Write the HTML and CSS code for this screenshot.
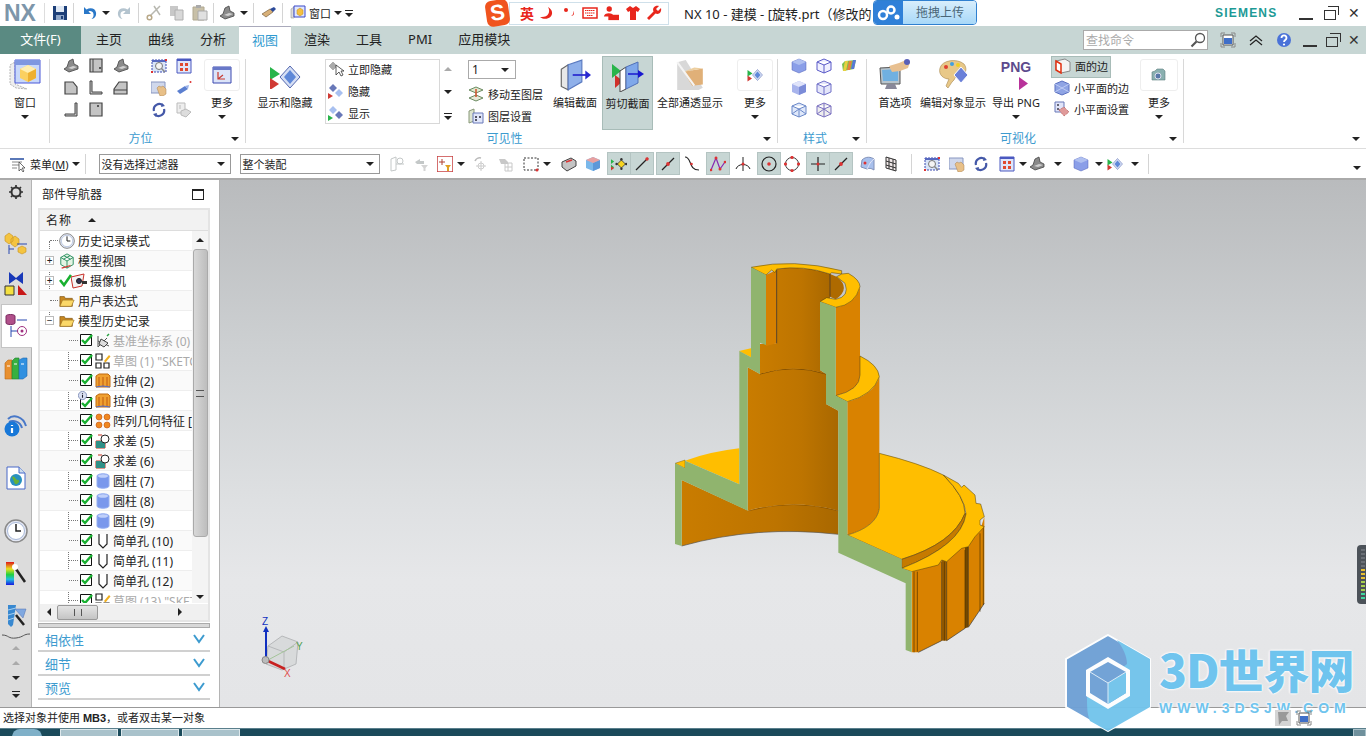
FILE: index.html
```html
<!DOCTYPE html>
<html lang="zh-CN">
<head>
  <meta charset="UTF-8">
  <title>NX 10 - 建模</title>
  <link rel="stylesheet" href="styles.css">
</head>
<body>

<svg class="sprite" xmlns="http://www.w3.org/2000/svg">
  <symbol id="save" viewBox="0 0 16 16"><path d="M1 1h14v14H1z" fill="#1d3f78"/><path d="M4 1h8v6H4z" fill="#dfe8f4"/><path d="M4 10h8v5H4z" fill="#8fa6c8"/><path d="M9 11h2v3H9z" fill="#1d3f78"/></symbol>
  <symbol id="undo" viewBox="0 0 16 16"><path d="M3 2v7h7L7.500 6.500C9 5.500 12 6 12.500 9c.3 2-.5 4-2 5 3.500-.5 5-3.500 4.500-6.500C14.500 3.500 9.500 2 5.500 4.500z" fill="#2a78c8"/></symbol>
  <symbol id="redo" viewBox="0 0 16 16"><path d="M13 2v7H6l2.500-2.500C7 5.500 4 6 3.500 9c-.3 2 .5 4 2 5C2 13.500.5 10.500 1 7.500 1.500 3.500 6.500 2 10.500 4.500z" fill="#b4c4cf"/></symbol>
  <symbol id="cut" viewBox="0 0 16 16"><path d="M14 1L4 11M8 1l6 9" stroke="#b8b8b0" stroke-width="1.500" fill="none"/><circle cx="3.500" cy="12.500" r="2.300" fill="none" stroke="#b8a888" stroke-width="1.500"/></symbol>
  <symbol id="copy" viewBox="0 0 16 16"><path d="M1 1h8v10H1z" fill="#c8c8c8"/><path d="M6 5h8v10H6z" fill="#d8d8d8" stroke="#b0b0b0"/></symbol>
  <symbol id="paste" viewBox="0 0 16 16"><path d="M1 2h11v13H1z" fill="#c8c0a8" stroke="#b0a890"/><path d="M4 0h5v3H4z" fill="#aaa"/><path d="M6 6h9v9H6z" fill="#e0e0e0" stroke="#aaa"/></symbol>
  <symbol id="iso" viewBox="0 0 16 16"><path d="M1 11l3-2 2-6 4-2 1 5 4 2v3l-9 3z" fill="#8a8a8a" stroke="#444" stroke-width=".8"/><path d="M5 10l5-2 4 1-5 2z" fill="#d0d0d0"/></symbol>
  <symbol id="eraser" viewBox="0 0 16 16"><path d="M1 9l8-5 3 3-7 5z" fill="#d8b078" stroke="#6a5030" stroke-width=".6"/><path d="M9 4l4-2 2 2-3 3z" fill="#2c4a9a"/></symbol>
  <symbol id="window" viewBox="0 0 16 16"><path d="M1 4l3-2v11H1z" fill="#ddd" stroke="#888" stroke-width=".5"/><path d="M4 1h11v11H4z" fill="#dfe6ff" stroke="#3a48c8"/><path d="M7 5l3-2 3 2v4l-3 2-3-2z" fill="#f6c040" stroke="#b88820" stroke-width=".5"/></symbol>

  <symbol id="winbig" viewBox="0 0 32 32"><path d="M1 6l5-3v22l12 5-11-1-6-4z" fill="#eee" stroke="#999" stroke-width=".7" stroke-dasharray="2 1"/><path d="M6 1h25v23H6z" fill="#c8d8fa" stroke="#4a58d8"/><path d="M6 1h25v5H6z" fill="#7f97e0"/><path d="M11 10l8-4 8 4v9l-8 4-8-4z" fill="#fbd060"/><path d="M11 10l8 4 8-4-8-4z" fill="#ffeeb0"/><path d="M19 14v9l8-4v-9z" fill="#eeb030"/></symbol>
  <symbol id="v-top" viewBox="0 0 16 16"><path d="M2 1h12v13H2z" fill="#c4c4c4" stroke="#444" stroke-width="1.200"/><path d="M5 1v13" stroke="#444"/><circle cx="12" cy="10" r="1" fill="#333"/></symbol>
  <symbol id="v-front" viewBox="0 0 16 16"><path d="M2 2h8l4 5v7H2z" fill="#c4c4c4" stroke="#444" stroke-width="1.200"/></symbol>
  <symbol id="v-left" viewBox="0 0 16 16"><path d="M2 1h2v11h10v2H2z" fill="#c4c4c4" stroke="#444"/></symbol>
  <symbol id="v-right" viewBox="0 0 16 16"><path d="M1 9l5-7h8v12H1z" fill="#c4c4c4" stroke="#444" stroke-width="1.200"/><path d="M1 10h13" stroke="#444"/></symbol>
  <symbol id="v-corner" viewBox="0 0 16 16"><path d="M12 1h2v13H2v-2h10z" fill="#c4c4c4" stroke="#444"/></symbol>
  <symbol id="v-back" viewBox="0 0 16 16"><path d="M2 1h12v13H2z" fill="#c4c4c4" stroke="#444" stroke-width="1.200"/><circle cx="10" cy="4" r="1" fill="#333"/></symbol>
  <symbol id="fit" viewBox="0 0 16 16"><path d="M1 2h14v12H1z" fill="#d8e4f8" stroke="#3a48b0" stroke-dasharray="2 1"/><path d="M1 2h14v2H1z" fill="#5668c0"/><circle cx="8" cy="8" r="3.500" fill="#f4f4f4" stroke="#777"/><path d="M10.500 10.500L14 14" stroke="#888" stroke-width="1.500"/><path d="M14 1h2v2h-2zM0 13h2v2H0z" fill="#d33"/></symbol>
  <symbol id="fitred" viewBox="0 0 16 16"><path d="M1 1h14v14H1z" fill="#dfe6fa" stroke="#4a58c0"/><path d="M1 1h14v2H1z" fill="#4a58c0"/><path d="M4 5h3v3H4zM9 5h3v3H9zM4 10h3v3H4zM9 10h3v3H9z" fill="#e04a30"/></symbol>
  <symbol id="pan" viewBox="0 0 16 16"><path d="M0 2h14v11H0z" fill="#d0d8ec" stroke="#8896c0"/><path d="M6 8l2-2 2 1 2-1 3 3v5l-3 2H9z" fill="#e8c088" stroke="#a88050" stroke-width=".5"/></symbol>
  <symbol id="persp" viewBox="0 0 16 16"><path d="M1 11l8-5 3 3-8 5z" fill="#5b7fd0"/><path d="M9 6l3 3 1-4z" fill="#9ab0e8"/><circle cx="14.500" cy="2" r="1" fill="#d33"/></symbol>
  <symbol id="rotate" viewBox="0 0 16 16"><path d="M3 9A5.500 5.500 0 0 1 12 3.500" fill="none" stroke="#4458a8" stroke-width="2.200"/><path d="M13 7A5.500 5.500 0 0 1 4 12.500" fill="none" stroke="#4458a8" stroke-width="2.200"/><path d="M11 1l3 3-4 1zM5 15l-3-3 4-1z" fill="#4458a8"/></symbol>
  <symbol id="restore" viewBox="0 0 16 16"><path d="M1 1h8v10H1z" fill="#eee" stroke="#bbb"/><path d="M5 9l5-2 5 3-5 5-5-2z" fill="#ddd" stroke="#bbb"/><path d="M3 4h2M3 6h2" stroke="#bbb"/></symbol>
  <symbol id="csys" viewBox="0 0 20 20"><path d="M1 2h18v16H1z" fill="#dce4f8" stroke="#3a48b0"/><path d="M1 2h18v3H1z" fill="#6878c8"/><path d="M6 7v7h7M6 14l5-4" stroke="#c83a30" stroke-width="1.200" fill="none"/></symbol>
  <symbol id="showhide" viewBox="0 0 32 24"><path d="M1 2l10 7-10 6z" fill="#28b44a"/><path d="M1 13l9 6-9 6z" fill="#d03a34"/><path d="M11 12L21 1l10 11-10 11z" fill="#d6dff4" stroke="#5468b0"/><path d="M15 12l6-7 6 7-6 7z" fill="#5f88d8"/></symbol>
  <symbol id="hidenow" viewBox="0 0 16 16"><path d="M1 5l4-4 4 4-4 4z" fill="#aaa" stroke="#888" stroke-width=".5"/><path d="M8 4v10l3-3 2 4 2-1-2-4h3z" fill="#fff" stroke="#333" stroke-width=".8"/></symbol>
  <symbol id="hide" viewBox="0 0 16 16"><path d="M1 5l4-4 4 4-4 4z" fill="#6878b8"/><path d="M7 10l4-4 4 4-4 4z" fill="#a8c0f0"/><path d="M0 10l5 3-5 3z" fill="#d03a34"/></symbol>
  <symbol id="show" viewBox="0 0 16 16"><path d="M1 5l4-4 4 4-4 4z" fill="#a8c0f0"/><path d="M7 10l4-4 4 4-4 4z" fill="#6878b8"/><path d="M0 10l5 3-5 3z" fill="#28b44a"/></symbol>
  <symbol id="movelayer" viewBox="0 0 16 16"><path d="M1 4l7-3 7 3-7 3z" fill="#dfe8d0" stroke="#6a8a60"/><path d="M1 12l7-3 7 3-7 3z" fill="#e8e8d8" stroke="#6a8a60"/><path d="M8 3v8" stroke="#d0502a" stroke-width="1.500"/></symbol>
  <symbol id="layers" viewBox="0 0 16 16"><path d="M1 3l5-2v12l-5 2z" fill="#dde4d0" stroke="#889878"/><path d="M5 5h10v10H5z" fill="#e0e6fa" stroke="#6878b8"/><path d="M7 8h2v2H7zM11 8h2v2h-2zM7 11h2v2H7z" fill="#556"/></symbol>
  <symbol id="editsec" viewBox="0 0 28 28"><path d="M2 9l6-4v22l-6-3z" fill="#e8e8e8" stroke="#666"/><path d="M8 5l12-4v19L8 27z" fill="#8fb0ea" stroke="#5a7ac0"/><path d="M12 14h13" stroke="#2828d0" stroke-width="1.500"/><path d="M23 10l5 4-5 4z" fill="#2828d0"/></symbol>
  <symbol id="cutsec" viewBox="0 0 32 32"><path d="M0 4l9 7-9 7z" fill="#28b44a"/><path d="M3 15l8 6-8 7z" fill="#d0302a"/><path d="M8 11l6-4v22l-6 3z" fill="#fff" stroke="#444"/><path d="M14 7l12-5v21l-12 6z" fill="#7fa8ea" stroke="#5070b8"/><path d="M16 14h12" stroke="#1818d0" stroke-width="1.500"/><path d="M26 10l6 4-6 4z" fill="#1818d0"/></symbol>
  <symbol id="clear" viewBox="0 0 30 30"><path d="M3 3l8-2 16 26-4 2H3z" fill="#d8d8d8"/><path d="M9 12l18-3v15l-10 1z" fill="#e0b078"/><path d="M9 12l10-4 8 1-18 3z" fill="#edcfa0"/><path d="M3 3l16 22" stroke="#f4f4f4" stroke-width="2"/></symbol>
  <symbol id="s1" viewBox="0 0 16 16"><path d="M1 4l7-3 7 3v8l-7 3-7-3z" fill="#8a9ee8" stroke="#5060b8" stroke-width=".5"/><path d="M1 4l7 3 7-3-7-3z" fill="#b0c0f0"/></symbol>
  <symbol id="s2" viewBox="0 0 16 16"><path d="M1 4l7-3 7 3v8l-7 3-7-3zM1 4l7 3 7-3M8 7v8" fill="#f0f0ff" stroke="#5a5ac8"/></symbol>
  <symbol id="s3" viewBox="0 0 16 16"><path d="M1 6l3-3 11-1-2 9-11 2z" fill="#7ac050"/><path d="M4 3h3L5 13H2z" fill="#e8d040"/><path d="M8 3h3l-2 9H6z" fill="#e88040"/><path d="M12 2h3l-2 9h-3z" fill="#5878d8"/></symbol>
  <symbol id="s4" viewBox="0 0 16 16"><path d="M1 4l7-3 7 3v8l-7 3-7-3z" fill="#a8b4ec"/><path d="M1 4l7 3 7-3-7-3z" fill="#e0e4fa"/><path d="M8 7v8l7-3V4z" fill="#7c8cd8"/></symbol>
  <symbol id="s5" viewBox="0 0 16 16"><path d="M1 4l7-3 7 3v8l-7 3-7-3zM1 4l7 3 7-3M8 7v8" fill="#e4e6fa" stroke="#7070c8"/></symbol>
  <symbol id="s6" viewBox="0 0 16 16"><path d="M1 4l7-3 7 3v8l-7 3-7-3zM1 4l7 3 7-3M8 7v8M1 12l7-5 7 5" fill="#dfe8fa" stroke="#6a88c8"/></symbol>
  <symbol id="s7" viewBox="0 0 16 16"><path d="M1 4l7-3 7 3v8l-7 3-7-3zM1 4l7 3 7-3M8 7v8M1 12l7-5 7 5M8 1v6" fill="#eee" stroke="#7a70c0"/></symbol>
  <symbol id="prefs" viewBox="0 0 32 32"><path d="M1 9l20-1v17H2z" fill="#b8c4cc" stroke="#555"/><path d="M3 11l16-1v12H4z" fill="#70b0e0"/><path d="M8 25h8l2 5H6z" fill="#889"/><path d="M10 7l10-3 7-3 4 2-2 6-8 3-8 1z" fill="#e8c090"/><circle cx="28" cy="3" r="3" fill="#5a60b8"/></symbol>
  <symbol id="palette" viewBox="0 0 32 32"><path d="M3 9C5 1 20-1 27 5c3 4 2 8 0 10-5 3-8 1-10 6l-2 2-4 6-2-2 3-7C7 20 1 16 3 9z" fill="#e8c888" stroke="#a88850" stroke-width=".6"/><circle cx="9" cy="8" r="2" fill="#e04030"/><circle cx="15" cy="5" r="2" fill="#40a0e0"/><circle cx="21" cy="6" r="2" fill="#f0d020"/><path d="M17 16l7-8 7 8-7 8z" fill="#6a80d8" stroke="#fff"/></symbol>
  <symbol id="edges" viewBox="0 0 16 16"><path d="M1 3l9-2 5 3v9l-9 2-5-3z" fill="#f4f4f4" stroke="#888"/><path d="M1 3l5 3v9l-5-3z" fill="#fff" stroke="#e03010" stroke-width="1.500"/></symbol>
  <symbol id="facet" viewBox="0 0 16 16"><path d="M1 4l7-3 7 3v8l-7 3-7-3z" fill="#8fa4e4" stroke="#5a70c0"/><path d="M1 4l14 8M15 4L1 12" stroke="#c8d4f8" stroke-width=".8"/></symbol>
  <symbol id="facetset" viewBox="0 0 16 16"><path d="M1 1h9v10H1z" fill="#e0e4f8" stroke="#6878b8"/><path d="M3 3h2v2H3zM3 7h2v2H3z" fill="#667"/><path d="M5 9l5-3 5 5-5 4z" fill="#e09a9a" stroke="#b86060" stroke-dasharray="1 1"/></symbol>
  <symbol id="camera" viewBox="0 0 16 16"><path d="M1 5l3-1 2-2h6l2 2v9H1z" fill="#8ab0b0" stroke="#5f7f80" stroke-width=".6"/><circle cx="7" cy="9" r="3" fill="#5878a8" stroke="#dde"/></symbol>
  <symbol id="menu" viewBox="0 0 16 16"><path d="M0 2h14v2H0z" fill="#5a78b8"/><path d="M2 6h10M2 9h7M2 12h5" stroke="#888" stroke-width="1.200"/><path d="M9 6v9l2-2 2 3 1-1-2-3h3z" fill="#fff" stroke="#333" stroke-width=".7"/></symbol>
  <symbol id="filter1" viewBox="0 0 16 16"><path d="M2 3l5-2v13l-5 1zM7 8h8" stroke="#c4c8c8" fill="none"/><circle cx="11" cy="5" r="3" fill="none" stroke="#c4c8c8"/></symbol>
  <symbol id="filter2" viewBox="0 0 16 16"><path d="M2 6l5-3v2h4v3H4z" fill="#c4c8c8"/><path d="M8 9h7l-2.500 3v3h-2v-3z" fill="#d4d4d4"/></symbol>
  <symbol id="filter3" viewBox="0 0 16 16"><path d="M0 0h16v16H0z" fill="#fff" stroke="#c84040" stroke-width="1.500"/><path d="M5 3v6M2 6h6" stroke="#b04030"/><path d="M8 9h6l-2 2.500V15h-2v-3.500z" fill="#e0a020"/></symbol>
  <symbol id="grayrot" viewBox="0 0 16 16"><path d="M2 5a5 5 0 0 1 6-3" fill="none" stroke="#bbb" stroke-width="1.500"/><path d="M8 5v10M3 10h10" stroke="#ccc"/><circle cx="8" cy="10" r="3" fill="none" stroke="#ccc"/></symbol>
  <symbol id="grayset" viewBox="0 0 16 16"><path d="M1 3h6l3 3v2H3z" fill="#c8c8c8"/><path d="M7 7h7v8H7zM7 11h7M10 7v8" fill="none" stroke="#c8c8c8"/></symbol>
  <symbol id="dashbox" viewBox="0 0 16 16"><path d="M1 2h14v12H1z" fill="#fff" stroke="#333" stroke-dasharray="2 1.500"/><circle cx="14" cy="14" r="1.500" fill="#d33"/></symbol>
  <symbol id="solid" viewBox="0 0 16 16"><path d="M1 6l9-4 5 3v5l-9 5-5-4z" fill="#c4c4c4" stroke="#444"/><path d="M5 6l6-2" stroke="#d33" stroke-width="1.500"/></symbol>
  <symbol id="cube" viewBox="0 0 16 16"><path d="M1 4l7-3 7 3v8l-7 3-7-3z" fill="#7ab8ea"/><path d="M8 7v8l7-3V4z" fill="#5c98d8"/><path d="M1 4l7 3 7-3-7-3z" fill="#e8a0a0"/></symbol>
  <symbol id="t-all" viewBox="0 0 20 16"><path d="M0 2l4 3-4 3zM0 9l4 3-4 3z" fill="#28b44a"/><path d="M0 11l4 2-4 3z" fill="#d03a34"/><path d="M13 3l5 5-5 5-5-5z" fill="#f6d420" stroke="#333"/><circle cx="13" cy="2" r="1.500" fill="#333"/><circle cx="13" cy="14" r="1.500" fill="#333"/><circle cx="7" cy="8" r="1.500" fill="#333"/><circle cx="19" cy="8" r="1.500" fill="#333"/></symbol>
  <symbol id="t-line" viewBox="0 0 16 16"><path d="M2 14L14 2" stroke="#222" stroke-width="1.200"/><circle cx="13" cy="3" r="1.700" fill="#d33"/></symbol>
  <symbol id="t-mid" viewBox="0 0 16 16"><path d="M2 14L14 2" stroke="#222" stroke-width="1.200"/><circle cx="8" cy="8" r="1.900" fill="#d33"/></symbol>
  <symbol id="t-curve" viewBox="0 0 16 16"><path d="M1 1c7 0 3 13 14 13" fill="none" stroke="#222" stroke-width="1.200"/><circle cx="7.500" cy="8" r="1.300" fill="#d33"/></symbol>
  <symbol id="t-poly" viewBox="0 0 16 16"><path d="M1 14L6 2l4 11 5-7" fill="none" stroke="#8828b0" stroke-width="1.200"/><circle cx="6" cy="2" r="1.500" fill="#d33"/><circle cx="10" cy="13" r="1.500" fill="#d33"/><circle cx="1" cy="14" r="1.300" fill="#d33"/><circle cx="15" cy="6" r="1.300" fill="#d33"/></symbol>
  <symbol id="t-perp" viewBox="0 0 16 16"><path d="M8 1v14M1 13C3 7 13 7 15 13" fill="none" stroke="#222"/><circle cx="8" cy="8" r="1.500" fill="#d33"/></symbol>
  <symbol id="t-center" viewBox="0 0 16 16"><circle cx="8" cy="8" r="7" fill="none" stroke="#222" stroke-width="1.200"/><circle cx="8" cy="8" r="1.800" fill="#d33"/></symbol>
  <symbol id="t-quad" viewBox="0 0 16 16"><circle cx="8" cy="8" r="6.500" fill="none" stroke="#333"/><g fill="#d33"><circle cx="8" cy="1.500" r="1.600"/><circle cx="8" cy="14.500" r="1.600"/><circle cx="1.500" cy="8" r="1.600"/><circle cx="14.500" cy="8" r="1.600"/></g></symbol>
  <symbol id="t-cross" viewBox="0 0 16 16"><path d="M8 1v14M1 8h14" stroke="#222" stroke-width="1.200"/><circle cx="8" cy="8" r="1.500" fill="#d33"/></symbol>
  <symbol id="t-face" viewBox="0 0 16 16"><path d="M3 4C7 0 12 1 15 3v11c-3-2-5-2-7-1L2 11z" fill="#a8c0ec" stroke="#8090b8"/><path d="M8 13c2-3 2-6 7-10" fill="none" stroke="#e8e8f8"/><circle cx="6" cy="7" r="1.500" fill="#d33"/></symbol>
  <symbol id="t-grid" viewBox="0 0 16 16"><path d="M3 1l10 3v11L3 12zM3 5l10 3M3 9l10 3M6 2v11M10 3v11" fill="#f0e8e8" stroke="#333"/></symbol>
  <symbol id="mag" viewBox="0 0 16 16"><circle cx="10" cy="6" r="4.500" fill="#fff" stroke="#555" stroke-width="1.300"/><path d="M6.500 9.500L1.500 14.500" stroke="#555" stroke-width="2.200"/></symbol>
  <symbol id="fullscreen" viewBox="0 0 16 16"><path d="M1 5V1h4M11 1h4v4M15 11v4h-4M5 15H1v-4" fill="none" stroke="#888"/><path d="M3 3h10v10H3z" fill="#fff" stroke="#555"/><path d="M4 6h8v6H4z" fill="#3f6fc8"/></symbol>
  <symbol id="help" viewBox="0 0 16 16"><circle cx="8" cy="8" r="7" fill="#4a72d8"/><path d="M5.500 6c0-3.500 5-3.500 5 0 0 2-2.500 2-2.500 4" fill="none" stroke="#fff" stroke-width="1.800"/><circle cx="8" cy="12.500" r="1.100" fill="#fff"/></symbol>

  <symbol id="gear" viewBox="0 0 16 16"><circle cx="8" cy="8" r="4.500" fill="none" stroke="#333" stroke-width="2"/><path d="M8 1v3M8 12v3M1 8h3M12 8h3M3 3l2 2M11 11l2 2M13 3l-2 2M5 11l-2 2" stroke="#333" stroke-width="1.700"/></symbol>
  <symbol id="r-asm" viewBox="0 0 24 24"><path d="M1 5l4-3 4 3v5l-4 3-4-3zM7 8l4-3 4 3v5l-4 3-4-3z" fill="#f4c440" stroke="#c89020" stroke-width=".6"/><path d="M5 14v9M5 18h5M13 13h10" stroke="#2848b0"/><path d="M14 17l4-2 4 2v4l-4 2-4-2z" fill="#f4c440" stroke="#c89020" stroke-width=".6"/></symbol>
  <symbol id="r-con" viewBox="0 0 24 24"><path d="M5 0l7 6 7-6v12l-7-5-7 5z" fill="#1838b8"/><path d="M1 14h9v9H1z" fill="#f4e040" stroke="#333"/><path d="M14 23h9l-9-10z" fill="#c81818"/></symbol>
  <symbol id="r-part" viewBox="0 0 24 24"><path d="M1 2c0-2 9-2 9 0v7c0 2-9 2-9 0z" fill="#b0508a" stroke="#7a2a60"/><path d="M12 6h10M6 12v11M6 17h7" stroke="#2848b0"/><circle cx="17" cy="17" r="4.500" fill="none" stroke="#a03080"/><circle cx="17" cy="17" r="1.500" fill="#a03080"/></symbol>
  <symbol id="r-books" viewBox="0 0 24 24"><path d="M1 6l3-3h4v19H1z" fill="#e89030" stroke="#b86a18" stroke-width=".6"/><path d="M8 4l3-3h4v21H8z" fill="#38b040" stroke="#208030" stroke-width=".6"/><path d="M15 3l4-2h4v18l-4 3h-4z" fill="#3090e0" stroke="#2068b0" stroke-width=".6"/><path d="M3 9h3M10 7h3M17 7h3" stroke="#fff"/></symbol>
  <symbol id="r-info" viewBox="0 0 24 24"><path d="M4 6C9 1 19 3 22 13" fill="none" stroke="#4878c8" stroke-width="2"/><path d="M5 9c4-2 11-1 13 6" fill="none" stroke="#4878c8" stroke-width="2"/><circle cx="8" cy="16" r="7.500" fill="#1878d8"/><path d="M8 12v1M8 15v5" stroke="#fff" stroke-width="2.200"/></symbol>
  <symbol id="r-web" viewBox="0 0 20 24"><path d="M1 1h12l6 6v16H1z" fill="#fff" stroke="#4868c8"/><path d="M13 1v6h6" fill="#cde" stroke="#4868c8"/><circle cx="10" cy="14" r="6" fill="#2890c0"/><path d="M6 11c3-2 3 3 6 3s0 5-3 4z" fill="#68b038"/></symbol>
  <symbol id="clock" viewBox="0 0 24 24"><circle cx="12" cy="12" r="11" fill="#e4e8f4" stroke="#8a8a8a" stroke-width="1.500"/><circle cx="12" cy="12" r="8.500" fill="#fff" stroke="#a8b8d8"/><path d="M12 5v7h5" fill="none" stroke="#222" stroke-width="1.500"/></symbol>
  <symbol id="r-color" viewBox="0 0 22 24"><defs><linearGradient id="rb" x1="0" y1="0" x2="0" y2="1"><stop offset="0" stop-color="#e01818"/><stop offset=".3" stop-color="#e8e020"/><stop offset=".55" stop-color="#20d040"/><stop offset=".75" stop-color="#20c0e0"/><stop offset="1" stop-color="#1818e0"/></linearGradient></defs><path d="M1 0h8v23H1z" fill="url(#rb)"/><path d="M11 7l9 13" stroke="#222" stroke-width="2.500"/><circle cx="10" cy="5" r="3" fill="#fff"/></symbol>
  <symbol id="r-tool" viewBox="0 0 22 24"><path d="M3 1h8l-3 20-2 2-3-3z" fill="#3888d0"/><path d="M3 6l8-2M3 11l7-2M3 16l6-2" stroke="#a8d0f0"/><path d="M10 5h11l-3 9z" fill="#80a8e0" stroke="#5070b0" stroke-width=".5"/><path d="M11 11l8 10" stroke="#222" stroke-width="2.500"/></symbol>

  <symbol id="t-view" viewBox="0 0 18 18"><path d="M9 1l7 4v8l-7 4-7-4V5zM2 5l7 4 7-4M9 9v8M5.500 3L13 7M12.500 3L5 7" fill="#e4f4e4" stroke="#208a58"/><path d="M3 17l10-3" stroke="#d33" stroke-width="1.300"/></symbol>
  <symbol id="t-cam" viewBox="0 0 16 16"><path d="M0 4l13-3-2 12-9 2z" fill="#f4f4f4" stroke="#c83028"/><circle cx="8" cy="8" r="2.500" fill="#335" stroke="#222"/><path d="M11 8h5v3h-5z" fill="#333"/></symbol>
  <symbol id="folder" viewBox="0 0 18 16"><path d="M1 3h5l1 2h8v9H1z" fill="#c88820" stroke="#7a5010" stroke-width=".7"/><path d="M1 14l3-7h13l-3 7z" fill="#fbd868" stroke="#9a7020" stroke-width=".7"/></symbol>
  <symbol id="chk" viewBox="0 0 13 13"><path d="M.5.500h11v11H.5z" fill="#fff" stroke="#111"/><path d="M2 6l3 3 7-8" fill="none" stroke="#18b030" stroke-width="2.400"/></symbol>
  <symbol id="f-datum" viewBox="0 0 16 16"><path d="M3 14V3M3 8l11 5M3 14l9-9" fill="none" stroke="#555"/><path d="M6 6l7 4-4 4-5-3z" fill="#ddd" stroke="#444"/><path d="M12 3l2-2" stroke="#28a040" stroke-width="1.500"/></symbol>
  <symbol id="f-sketch" viewBox="0 0 16 16"><path d="M1 1h6v6H1zM1 10h5v5H1zM9 10h5v5H9z" fill="#fff" stroke="#222" stroke-width="1.200"/><path d="M9 8l5-6 1.500 1.500-5 6z" fill="#f0b020"/></symbol>
  <symbol id="f-extr" viewBox="0 0 16 16"><path d="M1 3l3-2h9l2 2v11H1z" fill="#f0a030" stroke="#c06a10"/><path d="M4 4v10M8 4v10M12 4v10" stroke="#c05a10"/><path d="M1 14l7-1 7 1" stroke="#5070d0" fill="none"/></symbol>
  <symbol id="f-pattern" viewBox="0 0 16 16"><g fill="#f08820" stroke="#c05010" stroke-width=".6"><circle cx="4" cy="4" r="3"/><circle cx="12" cy="4" r="3"/><circle cx="4" cy="12" r="3"/><circle cx="12" cy="12" r="3"/></g></symbol>
  <symbol id="f-sub" viewBox="0 0 16 16"><path d="M3 2h4M1 8h9v7H1z" fill="#2f9088" stroke="#c03020"/><path d="M1 8h9v7H1z" fill="#2f9088"/><circle cx="10" cy="6" r="4" fill="#fff" stroke="#222"/></symbol>
  <symbol id="f-cyl" viewBox="0 0 14 16"><path d="M1 3c0-3 12-3 12 0v10c0 3-12 3-12 0z" fill="#7a98ec" stroke="#98b0f0"/><ellipse cx="7" cy="3" rx="5" ry="1.800" fill="#c0d0fa"/></symbol>
  <symbol id="f-hole" viewBox="0 0 12 16"><path d="M2 1v10l4 4 4-4V1" fill="#fff" stroke="#222" stroke-width="1.200"/></symbol>
  <symbol id="f-info" viewBox="0 0 16 16"><circle cx="6" cy="6" r="5.500" fill="#d8def0" stroke="#7080b0"/><path d="M6 3v1M6 5v4" stroke="#223" stroke-width="1.400"/></symbol>

  <symbol id="chev" viewBox="0 0 12 10"><path d="M1 1l5 7 5-7" fill="none" stroke="#3d9bcf" stroke-width="2"/></symbol>
</svg>

<header class="titlebar">
  <span class="nx-logo">NX</span>
  <div class="qat">
    <svg class="ic"><use href="#save"/></svg>
    <span class="vsep"></span>
    <svg class="ic"><use href="#undo"/></svg><i class="caret"></i>
    <svg class="ic"><use href="#redo"/></svg>
    <span class="vsep"></span>
    <svg class="ic"><use href="#cut"/></svg>
    <svg class="ic"><use href="#copy"/></svg>
    <svg class="ic"><use href="#paste"/></svg>
    <span class="vsep"></span>
    <svg class="ic tight"><use href="#iso"/></svg><i class="caret"></i>
    <span class="vsep"></span>
    <svg class="ic"><use href="#eraser"/></svg>
    <span class="vsep"></span>
    <svg class="ic"><use href="#window"/></svg>
    <span class="qat-text">窗口</span><i class="caret"></i><i class="caret-more"></i>
  </div>
  <div class="ime">
    <span class="ime-logo">S</span>
    <div class="ime-bar">
      <b>英</b>
      <svg class="ic" viewBox="0 0 16 16"><path d="M9 2c3 5 0 11-8 10 5 4 13 1 12-5-.3-2-2-4-4-5z" fill="#e8261c"/></svg>
      <svg class="ic" viewBox="0 0 16 16"><circle cx="5" cy="5" r="2" fill="#e8261c"/><path d="M12 6c1 2 0 4-2 5 3 0 4-3 2-5z" fill="#e8261c"/></svg>
      <svg class="ic" viewBox="0 0 16 16"><path d="M1 3h14v10H1z" fill="none" stroke="#e8261c" stroke-width="1.500"/><path d="M3 5.500h10M3 8h10M5 10.500h6" stroke="#e8261c" stroke-width="1.200" stroke-dasharray="1.500 .5"/></svg>
      <svg class="ic" viewBox="0 0 18 16"><circle cx="7" cy="3.500" r="3" fill="#e8261c"/><path d="M1 12c0-5 11-5 11 0z" fill="#e8261c"/><path d="M6 10h12v6H6z" fill="#e8261c"/></svg>
      <svg class="ic" viewBox="0 0 16 16"><path d="M5 1L1 4l2 3 2-1v9h6V6l2 1 2-3-4-3-3 2z" fill="#e8261c"/></svg>
      <svg class="ic" viewBox="0 0 16 16"><path d="M15 3l-3 3-2-2 3-3C9 0 6 3 7.500 6.500L1 13l2 2 6.500-6.500C13 10 16 7 15 3z" fill="#e8261c"/></svg>
    </div>
  </div>
  <span class="doc-title">NX 10 - 建模 - [旋转.prt（修改的</span>
  <div class="upload">
    <span class="upload-ic"><svg viewBox="0 0 24 16" width="24" height="16"><circle cx="6" cy="10" r="4" fill="none" stroke="#fff" stroke-width="2.500"/><circle cx="14" cy="5" r="3.500" fill="none" stroke="#fff" stroke-width="2.500"/><circle cx="20" cy="12" r="2.500" fill="#fff"/></svg></span>
    <span class="upload-text">拖拽上传</span>
  </div>
  <span class="siemens">SIEMENS</span>
  <div class="winctl">
    <span class="w-min"></span><span class="w-max"></span><span class="w-close">✕</span>
  </div>
</header>

<nav class="tabs">
  <span class="tab file-tab">文件(F)</span>
  <span class="tab t-home">主页</span>
  <span class="tab t-a">曲线</span>
  <span class="tab t-a">分析</span>
  <span class="tab active">视图</span>
  <span class="tab t-b">渲染</span>
  <span class="tab t-a">工具</span>
  <span class="tab t-a">PMI</span>
  <span class="tab t-a">应用模块</span>
  <div class="tabs-right">
    <div class="search"><span>查找命令</span><svg class="ic"><use href="#mag"/></svg></div>
    <svg class="ic"><use href="#fullscreen"/></svg>
    <svg class="ic small" viewBox="0 0 16 12"><path d="M2 7l6-5 6 5M2 11l6-5 6 5" fill="none" stroke="#222" stroke-width="1.200"/></svg>
    <svg class="ic"><use href="#help"/></svg>
    <div class="winctl inner">
      <span class="w-min"></span><span class="w-max"></span><span class="w-close">✕</span>
    </div>
  </div>
</nav>

<section class="ribbon">
  <div class="rb-group g-window">
    <div class="rb-body">
      <div class="big w50"><svg class="ic32"><use href="#winbig"/></svg><span>窗口</span><i class="caret"></i></div>
    </div>
  </div>

  <div class="rb-group g-orient">
    <div class="rb-body">
      <div class="icon-grid cols3">
        <svg class="ic"><use href="#iso"/></svg><svg class="ic"><use href="#v-top"/></svg><svg class="ic"><use href="#iso"/></svg>
        <svg class="ic"><use href="#v-front"/></svg><svg class="ic"><use href="#v-left"/></svg><svg class="ic"><use href="#v-right"/></svg>
        <svg class="ic"><use href="#v-corner"/></svg><svg class="ic"><use href="#v-back"/></svg><span></span>
      </div>
      <div class="icon-grid cols2">
        <svg class="ic"><use href="#fit"/></svg><svg class="ic"><use href="#fitred"/></svg>
        <svg class="ic"><use href="#pan"/></svg><svg class="ic"><use href="#persp"/></svg>
        <svg class="ic"><use href="#rotate"/></svg><svg class="ic"><use href="#restore"/></svg>
      </div>
      <div class="big more"><div class="more-box"><svg class="ic20"><use href="#csys"/></svg></div><span>更多</span><i class="caret"></i></div>
    </div>
    <div class="rb-foot"><span>方位</span><i class="caret"></i></div>
  </div>

  <div class="rb-group g-vis">
    <div class="rb-body">
      <div class="big w78"><svg class="ic32 wide"><use href="#showhide"/></svg><span>显示和隐藏</span></div>
      <div class="list-box">
        <div class="row"><svg class="ic"><use href="#hidenow"/></svg>立即隐藏</div>
        <div class="row"><svg class="ic"><use href="#hide"/></svg>隐藏</div>
        <div class="row"><svg class="ic"><use href="#show"/></svg>显示</div>
      </div>
      <div class="list-arrows"><i class="caret up"></i><i class="caret"></i><i class="caret-more"></i></div>
      <div class="layer-col">
        <div class="layer-select"><span>1</span><i class="caret"></i></div>
        <div class="row"><svg class="ic"><use href="#movelayer"/></svg>移动至图层</div>
        <div class="row"><svg class="ic"><use href="#layers"/></svg>图层设置</div>
      </div>
      <div class="big w56"><svg class="ic32"><use href="#editsec"/></svg><span>编辑截面</span></div>
      <div class="big w51 hl"><svg class="ic32"><use href="#cutsec"/></svg><span>剪切截面</span></div>
      <div class="big w74"><svg class="ic32"><use href="#clear"/></svg><span>全部通透显示</span></div>
      <div class="big more ml10"><div class="more-box"><svg class="ic"><use href="#showhide"/></svg></div><span>更多</span><i class="caret"></i></div>
    </div>
    <div class="rb-foot"><span>可见性</span><i class="caret"></i></div>
  </div>

  <div class="rb-group g-style">
    <div class="rb-body">
      <div class="icon-grid cols3">
        <svg class="ic"><use href="#s1"/></svg><svg class="ic"><use href="#s2"/></svg><svg class="ic"><use href="#s3"/></svg>
        <svg class="ic"><use href="#s4"/></svg><svg class="ic"><use href="#s5"/></svg><span></span>
        <svg class="ic"><use href="#s6"/></svg><svg class="ic"><use href="#s7"/></svg><span></span>
      </div>
    </div>
    <div class="rb-foot"><span>样式</span><i class="caret"></i></div>
  </div>

  <div class="rb-group g-visual">
    <div class="rb-body">
      <div class="big w56"><svg class="ic32"><use href="#prefs"/></svg><span>首选项</span></div>
      <div class="big w60"><svg class="ic32"><use href="#palette"/></svg><span>编辑对象显示</span></div>
      <div class="big w66">
        <div class="png-icon"><b>PNG</b><svg width="9" height="13" viewBox="0 0 9 13"><path d="M0 0l9 6.500L0 13z" fill="#b8329a"/></svg></div>
        <span>导出 PNG</span><i class="caret"></i>
      </div>
      <div class="edge-col">
        <div class="row on"><svg class="ic"><use href="#edges"/></svg>面的边</div>
        <div class="row"><svg class="ic"><use href="#facet"/></svg>小平面的边</div>
        <div class="row"><svg class="ic"><use href="#facetset"/></svg>小平面设置</div>
      </div>
      <div class="big more wide-more"><div class="more-box"><svg class="ic"><use href="#camera"/></svg></div><span>更多</span><i class="caret"></i></div>
    </div>
    <div class="rb-foot"><span>可视化</span><i class="caret"></i></div>
  </div>

  <div class="rb-group g-rest">
    <div class="rb-body"></div>
    <div class="rb-foot"><span></span><i class="caret"></i></div>
  </div>
</section>

<section class="selbar">
  <svg class="ic menu-ic"><use href="#menu"/></svg>
  <span class="menu-text">菜单(<u>M</u>)</span><i class="caret"></i>
  <span class="vsep s-first"></span>
  <div class="sel w132"><span>没有选择过滤器</span><i class="caret"></i></div>
  <div class="sel w140"><span>整个装配</span><i class="caret"></i></div>
  <div class="tools">
    <span class="tb"><svg class="ic"><use href="#filter1"/></svg></span>
    <span class="tb"><svg class="ic"><use href="#filter2"/></svg></span>
    <span class="tb"><svg class="ic"><use href="#filter3"/></svg></span><i class="caret"></i>
    <span class="tb ml4"><svg class="ic"><use href="#grayrot"/></svg></span>
    <span class="tb ml1"><svg class="ic"><use href="#grayset"/></svg></span>
    <span class="tb ml1"><svg class="ic"><use href="#dashbox"/></svg></span><i class="caret"></i>
    <span class="tb ml6"><svg class="ic"><use href="#solid"/></svg></span>
    <span class="tb"><svg class="ic"><use href="#cube"/></svg></span>
    <span class="tb hl ml2"><svg class="ic"><use href="#t-all"/></svg></span>
    <span class="tb hl m-1"><svg class="ic"><use href="#t-line"/></svg></span>
    <span class="tb hl ml2"><svg class="ic"><use href="#t-mid"/></svg></span>
    <span class="tb"><svg class="ic"><use href="#t-curve"/></svg></span>
    <span class="tb hl ml2"><svg class="ic"><use href="#t-poly"/></svg></span>
    <span class="tb ml1"><svg class="ic"><use href="#t-perp"/></svg></span>
    <span class="tb hl ml2"><svg class="ic"><use href="#t-center"/></svg></span>
    <span class="tb m-1"><svg class="ic"><use href="#t-quad"/></svg></span>
    <span class="tb hl ml2"><svg class="ic"><use href="#t-cross"/></svg></span>
    <span class="tb hl m-1"><svg class="ic"><use href="#t-mid"/></svg></span>
    <span class="tb ml2"><svg class="ic"><use href="#t-face"/></svg></span>
    <span class="tb"><svg class="ic"><use href="#t-grid"/></svg></span>
    <span class="vsep s-tools"></span>
    <span class="tb"><svg class="ic"><use href="#fit"/></svg></span>
    <span class="tb ml1"><svg class="ic"><use href="#pan"/></svg></span>
    <span class="tb"><svg class="ic"><use href="#rotate"/></svg></span>
    <span class="tb ml2"><svg class="ic"><use href="#fitred"/></svg></span><i class="caret"></i>
    <span class="tb m-2"><svg class="ic"><use href="#iso"/></svg></span><i class="caret ml5"></i>
    <span class="tb ml7"><svg class="ic"><use href="#s1"/></svg></span><i class="caret ml2"></i>
    <span class="tb"><svg class="ic"><use href="#showhide"/></svg></span><i class="caret ml4"></i>
    <span class="vsep s-end"></span>
  </div>
  <i class="caret sel-end"></i>
</section>

<main class="workspace">
  <aside class="rail">
    <svg class="ic rail-gear"><use href="#gear"/></svg>
    <svg class="ric"><use href="#r-asm"/></svg>
    <svg class="ric"><use href="#r-con"/></svg>
    <span class="rail-active"><svg class="ric"><use href="#r-part"/></svg></span>
    <svg class="ric"><use href="#r-books"/></svg>
    <svg class="ric g32"><use href="#r-info"/></svg>
    <svg class="ric g29"><use href="#r-web"/></svg>
    <svg class="ric g29"><use href="#clock"/></svg>
    <svg class="ric g19"><use href="#r-color"/></svg>
    <svg class="ric g18"><use href="#r-tool"/></svg>
    <svg class="rail-wave" viewBox="0 0 30 8"><path d="M1 3c7 0 6 4 14 3s7-4 14-4" fill="none" stroke="#555"/></svg>
    <i class="caret up"></i>
    <i class="caret up"></i>
    <i class="caret"></i>
    <i class="caret-more"></i>
  </aside>

  <aside class="nav">
    <div class="nav-head"><span>部件导航器</span><i class="maxbox"></i></div>
    <div class="tree-box">
      <div class="tree-col">名称<i class="caret up dark"></i></div>
      <div class="tree-main">
        <div class="tree">
          <i class="vline v0"></i>
          <i class="vline v1"></i>
          <div class="node"><i class="hdash"></i><svg class="ic"><use href="#clock"/></svg><span>历史记录模式</span></div>
          <div class="node"><i class="plus">+</i><svg class="ic"><use href="#t-view"/></svg><span>模型视图</span></div>
          <div class="node"><i class="plus">+</i><svg class="ic tick" viewBox="0 0 13 13"><path d="M1 6l4 5 7-10" fill="none" stroke="#18b030" stroke-width="2.600"/></svg><svg class="ic"><use href="#t-cam"/></svg><span>摄像机</span></div>
          <div class="node"><i class="hdash"></i><svg class="ic"><use href="#folder"/></svg><span>用户表达式</span></div>
          <div class="node"><i class="plus">−</i><svg class="ic"><use href="#folder"/></svg><span>模型历史记录</span></div>
          <div class="node sub off"><i class="hdash"></i><svg class="chk"><use href="#chk"/></svg><svg class="ic"><use href="#f-datum"/></svg><span>基准坐标系 (0)</span></div>
          <div class="node sub off"><i class="hdash"></i><svg class="chk"><use href="#chk"/></svg><svg class="ic"><use href="#f-sketch"/></svg><span>草图 (1) "SKETCH_000"</span></div>
          <div class="node sub"><i class="hdash"></i><svg class="chk"><use href="#chk"/></svg><svg class="ic"><use href="#f-extr"/></svg><span>拉伸 (2)</span></div>
          <div class="node sub"><i class="hdash"></i><svg class="chk low"><use href="#chk"/></svg><svg class="badge"><use href="#f-info"/></svg><svg class="ic"><use href="#f-extr"/></svg><span>拉伸 (3)</span></div>
          <div class="node sub"><i class="hdash"></i><svg class="chk"><use href="#chk"/></svg><svg class="ic"><use href="#f-pattern"/></svg><span>阵列几何特征 [线性]</span></div>
          <div class="node sub"><i class="hdash"></i><svg class="chk"><use href="#chk"/></svg><svg class="ic"><use href="#f-sub"/></svg><span>求差 (5)</span></div>
          <div class="node sub"><i class="hdash"></i><svg class="chk"><use href="#chk"/></svg><svg class="ic"><use href="#f-sub"/></svg><span>求差 (6)</span></div>
          <div class="node sub"><i class="hdash"></i><svg class="chk"><use href="#chk"/></svg><svg class="ic"><use href="#f-cyl"/></svg><span>圆柱 (7)</span></div>
          <div class="node sub"><i class="hdash"></i><svg class="chk"><use href="#chk"/></svg><svg class="ic"><use href="#f-cyl"/></svg><span>圆柱 (8)</span></div>
          <div class="node sub"><i class="hdash"></i><svg class="chk"><use href="#chk"/></svg><svg class="ic"><use href="#f-cyl"/></svg><span>圆柱 (9)</span></div>
          <div class="node sub"><i class="hdash"></i><svg class="chk"><use href="#chk"/></svg><svg class="ic"><use href="#f-hole"/></svg><span>简单孔 (10)</span></div>
          <div class="node sub"><i class="hdash"></i><svg class="chk"><use href="#chk"/></svg><svg class="ic"><use href="#f-hole"/></svg><span>简单孔 (11)</span></div>
          <div class="node sub"><i class="hdash"></i><svg class="chk"><use href="#chk"/></svg><svg class="ic"><use href="#f-hole"/></svg><span>简单孔 (12)</span></div>
          <div class="node sub off"><i class="hdash"></i><svg class="chk"><use href="#chk"/></svg><svg class="ic"><use href="#f-sketch"/></svg><span>草图 (13) "SKETCH_001"</span></div>
        </div>
        <div class="vscroll">
          <i class="caret up dark"></i>
          <div class="vthumb"><b></b></div>
          <i class="caret dark"></i>
        </div>
      </div>
      <div class="hscroll">
        <i class="arrow-l"></i>
        <div class="hthumb"><b></b></div>
        <i class="arrow-r"></i>
      </div>
    </div>
    <div class="panel-grip"></div>
    <div class="acc"><span>相依性</span><svg class="chev"><use href="#chev"/></svg></div>
    <div class="acc"><span>细节</span><svg class="chev"><use href="#chev"/></svg></div>
    <div class="acc"><span>预览</span><svg class="chev"><use href="#chev"/></svg></div>
  </aside>

  <section class="viewport">
    <svg class="model" viewBox="0 0 1020 1230">
      <defs>
        <linearGradient id="inner" x1="0" y1="0" x2="1" y2="0">
          <stop offset="0" stop-color="#c97c00"/><stop offset=".6" stop-color="#bd7400"/><stop offset="1" stop-color="#a96800"/>
        </linearGradient>
      </defs>
      <!-- bottom flange, inside -->
      <path d="M65 690L265 782Q400 745 535 782V853Q290 825 65 888Z" fill="url(#inner)"/>
      <path d="M265 782Q400 745 535 782" fill="none" stroke="#7a4a00" stroke-width="2"/>
      <path d="M65 888Q290 825 535 853" fill="none" stroke="#555" stroke-width="2"/>
      <!-- middle bore -->
      <path d="M263 352L300 372Q400 340 498 372V462L535 482V782Q400 745 263 782Z" fill="url(#inner)"/>
      <path d="M300 372Q400 340 498 372" fill="none" stroke="#7a4a00" stroke-width="3"/>
      <!-- top bore -->
      <path d="M350 57Q430 45 510 72V145L480 155V360L498 372Q400 340 300 372V282L350 280Z" fill="url(#inner)"/>
      <path d="M510 72L530 80Q575 115 527 148L510 140Z" fill="#ae6a00"/>
      <path d="M318 75L350 60V280L318 288Z" fill="#d68000"/>
      <path d="M350 60V280M510 72V140" stroke="#5a4020" stroke-width="3" fill="none"/>
      <!-- outer faces -->
      <path d="M527 172Q585 162 600 110V375Q600 420 527 437Z" fill="#d98200"/>
      <path d="M562 455Q640 435 658 380V775Q650 830 562 855Z" fill="#d98200"/>
      <!-- ribbed skirt -->
      <path d="M755 965L845 925V1172L775 1207L755 1207Z" fill="#d98200"/>
      <path d="M860 925L915 885V1135L860 1172Z" fill="#d98200"/>
      <path d="M925 880L962 835L973 800V1060L925 1132Z" fill="#d98200"/>
      <path d="M845 925H860V1172H845Z" fill="#9a5c00"/>
      <path d="M915 885L925 880V1132L915 1135Z" fill="#734800"/>
      <path d="M762 965V1207M772 965V1205M845 935V1172M853 935V1172M860 935V1172M915 900V1135M925 890V1130M960 850V1085M970 830V1065" stroke="#4a3000" stroke-width="2" fill="none"/>
      <path d="M775 1207L845 1172M860 1172L915 1135M925 1132L973 1060" stroke="#333" stroke-width="2" fill="none"/>
      <!-- yellow faces -->
      <path d="M273 52Q400 25 545 62V72L515 68L510 72Q430 45 350 57L345 68L335 60L318 75Z" fill="#ffbe00" stroke="#4a3a10" stroke-width="1.500"/>
      <path d="M545 72L565 70Q600 90 600 110Q585 165 527 172L480 155L500 143L527 148Q570 140 555 100L530 80Z" fill="#ffbe00" stroke="#4a3a10" stroke-width="1.500"/>
      <path d="M237 303L273 295V322Z" fill="#ffbe00"/>
      <path d="M600 318Q655 345 658 380Q640 435 562 455L527 437Q600 420 600 375Z" fill="#ffbe00" stroke="#4a3a10" stroke-width="1.500"/>
      <path d="M75 632Q150 605 238 595V703Z" fill="#ffbe00"/>
      <path d="M45 640L75 630V655Z" fill="#ffbe00" stroke="#4a3a10"/>
      <path d="M658 610Q780 640 850 675Q915 740 915 790Q880 880 725 928L562 855Q650 830 658 775Z" fill="#ffbe00" stroke="#4a3a10" stroke-width="1.500"/>
      <path d="M725 928Q880 880 915 790L918 792Q905 885 725 955Z" fill="#c67a00" stroke="#4a3a10" stroke-width="1.500"/>
      <path d="M850 675L895 700L905 712L912 705L945 735L948 760L962 762L973 800L960 810L960 825L973 830L945 860L925 890L905 895L860 935L845 930L835 945L755 965L725 955Q905 885 918 792Q915 740 850 675Z" fill="#ffbe00" stroke="#4a3a10" stroke-width="1.500"/>
      <!-- cut faces -->
      <path d="M273 52L318 75V285L300 278V372L263 352V782L65 690V888L45 882V640L75 655V632L238 703V303L273 322Z" fill="#90b46e"/>
      <path d="M535 855V908L737 1000V1200L755 1207V965L725 955V928L562 855V455L527 437V172L480 155V360L498 372V462L535 482Z" fill="#90b46e"/>
    </svg>

    <svg class="triad" viewBox="0 0 40 60">
      <path d="M8 30l14-10 16 6-2 22-14 6-16-6z" fill="#d8dadb" stroke="#b6b8ba"/>
      <path d="M8 30l16 6 14-10M24 36v18" fill="none" stroke="#b6b8ba"/>
      <path d="M8 44l26-14" stroke="#a4c49a" stroke-width="1"/>
      <path d="M6 42V14" stroke="#1030c0" stroke-width="2"/><path d="M3 16l3-6 3 6z" fill="#1030c0"/>
      <path d="M6 44l19 9" stroke="#c82020" stroke-width="2.500"/>
      <circle cx="5.500" cy="44" r="3.500" fill="#bbb" stroke="#888"/>
      <text x="2" y="9" class="axis z">Z</text><text x="36" y="34" class="axis y">Y</text><text x="24" y="61" class="axis x">X</text>
    </svg>

    <div class="meter"><i></i><i></i><i></i><i></i><i></i><i class="y"></i><i class="y"></i><i class="y"></i><i class="g"></i><i class="g"></i><i class="g"></i><i class="c"></i><i class="c"></i></div>
  </section>
</main>

<footer class="statusbar">
  <span class="status-text">选择对象并使用 <b>MB3</b>，或者双击某一对象</span>
</footer>

<div class="taskbar">
  <span class="orb"></span>
  <span class="task"></span><span class="task"></span><span class="task"></span>
  <span class="task-end"></span>
</div>

<!-- watermark sits over the viewport and the status bar -->
<div class="watermark">
  <svg class="wm-logo" viewBox="0 0 86 98">
    <path d="M43 1l42 24v48L43 97 1 73V25z" fill="#6fa1d6" stroke="#fff" stroke-width="2"/>
    <path d="M52 6L85 25V73L43 97L25 87C22 80 22 72 22 62L62 30C62 22 58 14 52 6Z" fill="#72c4ec"/>
    <path d="M43 23l22 13v26L43 75 21 62V36z" fill="#fff"/>
    <path d="M43 28l18 10v21L43 70 25 59V38z" fill="#6fa1d6"/>
    <path d="M43 49l18-11v21L43 70z" fill="#72c4ec"/>
    <path d="M25 38l18 11 18-11M43 49v21" fill="none" stroke="#dcecf8"/>
  </svg>
  <div class="wm-text">
    <div class="wm-big">3D世界网</div>
    <div class="wm-url">WWW.3DSJW.COM</div>
  </div>
</div>
<div class="status-icons">
  <svg class="ic" viewBox="0 0 16 16"><path d="M0 0h16v16H0z" fill="#d4d4d4"/><path d="M3 2h11l-3 4 2 5H7l-3 4z" fill="#999"/></svg>
  <svg class="ic"><use href="#fullscreen"/></svg>
</div>

</body>
</html>
```

FILE: styles.css
```css
* {
  box-sizing: border-box;
}

html, body {
  margin: 0;
  height: 736px;
  overflow: hidden;
}

body {
  position: relative;
  display: flex;
  flex-direction: column;
  font-family: "Noto Sans", "Noto Sans CJK SC", sans-serif;
  font-size: 12px;
  color: #222;
  background-color: #fff;
}

.sprite {
  position: absolute;
  width: 0;
  height: 0;
}

.ic {
  width: 16px;
  height: 16px;
  flex: none;
}

.ic20 {
  width: 20px;
  height: 20px;
}

.ic32 {
  width: 32px;
  height: 32px;
  flex: none;
}

.caret {
  display: inline-block;
  flex: none;
  width: 0;
  height: 0;
  border-left: 4px solid transparent;
  border-right: 4px solid transparent;
  border-top: 4px solid #222;
}

.caret.up {
  border-top: 0;
  border-bottom: 4px solid #aaa;
}

.caret.up.dark {
  border-bottom-color: #222;
}

.caret.dark {
  border-top-color: #222;
}

.caret-more {
  display: inline-block;
  flex: none;
  width: 8px;
  height: 6px;
  border-top: 1px solid #222;
  position: relative;
}

.caret-more::after {
  content: "";
  position: absolute;
  left: 0;
  top: 2px;
  border-left: 4px solid transparent;
  border-right: 4px solid transparent;
  border-top: 4px solid #222;
}

.vsep {
  display: inline-block;
  flex: none;
  width: 1px;
  height: 20px;
  background-color: #d4d4d4;
}

/* title bar */
.titlebar {
  display: flex;
  align-items: center;
  height: 26px;
  flex: none;
  background-color: #fff;
}

.nx-logo {
  width: 45px;
  padding-left: 4px;
  font-family: "Liberation Sans", sans-serif;
  font-size: 23px;
  font-weight: bold;
  color: #7d96aa;
  border-right: 1px solid #ddd;
  line-height: 20px;
}

.qat {
  display: flex;
  align-items: center;
  width: 441px;
}

.qat .ic {
  margin-left: 7px;
}

.qat .ic.tight {
  margin-left: 5px;
}

.qat .vsep {
  margin-left: 5px;
}

.qat .caret {
  margin-left: 5px;
}

.qat-text {
  margin-left: 3px;
  font-size: 11px;
}

.qat .qat-text + .caret,
.qat .caret-more {
  margin-left: 3px;
}

.ime {
  display: flex;
  align-items: center;
  width: 184px;
  height: 26px;
}

.ime-logo {
  width: 23px;
  height: 26px;
  border-radius: 6px;
  transform: rotate(-8deg);
  background-color: #f0541e;
  color: #fff;
  font-family: "Liberation Sans", sans-serif;
  font-weight: bold;
  font-size: 22px;
  line-height: 26px;
  text-align: center;
}

.ime-bar {
  display: flex;
  align-items: center;
  justify-content: space-between;
  width: 160px;
  height: 23px;
  padding: 0 6px 0 10px;
  border: 1px solid #cfe0ea;
  color: #e8261c;
}

.ime-bar b {
  font-size: 14px;
}

.doc-title {
  width: 189px;
  margin-left: 14px;
  font-size: 13px;
  white-space: nowrap;
}

.upload {
  display: flex;
  width: 104px;
  height: 25px;
  margin-top: -1px;
  border-radius: 4px;
  overflow: hidden;
  border: 1px solid #2f80d0;
}

.upload-ic {
  display: flex;
  align-items: center;
  justify-content: center;
  width: 29px;
  background-color: #2f80d8;
}

.upload-text {
  flex: 1;
  padding-left: 13px;
  background: linear-gradient(#d8eefc, #a8d8f8);
  color: #4a6678;
  font-size: 12px;
  line-height: 23px;
}

.siemens {
  margin-left: 238px;
  font-family: "Liberation Sans", sans-serif;
  font-size: 12px;
  font-weight: bold;
  letter-spacing: 1.200px;
  color: #1d9a96;
}

.winctl {
  display: flex;
  align-items: center;
  margin-left: 22px;
  gap: 11px;
}

.w-min {
  width: 14px;
  height: 3px;
  margin-top: 10px;
  border-bottom: 2px solid #333;
}

.w-max {
  width: 12px;
  height: 10px;
  border: 1.500px solid #333;
  position: relative;
  margin-top: 3px;
}

.w-max::before {
  content: "";
  position: absolute;
  right: -4px;
  top: -5px;
  width: 10px;
  height: 8px;
  border: 1.500px solid #333;
  border-left: 0;
  border-bottom: 0;
}

.w-close {
  font-size: 14px;
  line-height: 16px;
  color: #333;
  margin-left: 1px;
}

/* tabs */
.tabs {
  display: flex;
  align-items: stretch;
  flex: none;
  height: 28px;
  background-color: #c7d6d4;
}

.tab {
  font-size: 13px;
  line-height: 27px;
  color: #222;
  white-space: nowrap;
}

.file-tab {
  width: 81px;
  text-align: center;
  background-color: #5a8a82;
  color: #fff;
}

.t-home {
  margin-left: 15px;
}

.t-a {
  margin-left: 26px;
}

.tab.active {
  width: 52px;
  margin-left: 13px;
  text-align: center;
  background-color: #fff;
  color: #2f9ad0;
  border-top: 1px solid #aab;
}

.t-b {
  margin-left: 13px;
}

.tabs-right {
  display: flex;
  align-items: center;
  margin-left: auto;
  padding-right: 6px;
  gap: 12px;
}

.search {
  display: flex;
  align-items: center;
  justify-content: space-between;
  width: 125px;
  height: 20px;
  padding: 0 1px 0 2px;
  background-color: #fff;
  border: 1px solid #aaa;
  color: #aaa;
}

.tabs-right .winctl.inner {
  margin-left: -1px;
  gap: 9px;
}

/* ribbon */
.ribbon {
  display: flex;
  flex: none;
  height: 94px;
  padding-top: 5px;
  background-color: #fff;
}

.rb-group {
  display: flex;
  flex: none;
  flex-direction: column;
  height: 84px;
  border-right: 1px solid #d8d8d8;
}

.g-window { width: 50px; }
.g-orient { width: 196px; }
.g-vis { width: 532px; }
.g-style { width: 89px; }
.g-visual { width: 317px; }

.g-rest {
  flex: 1;
  border-right: 0;
}

.rb-body {
  display: flex;
  flex: none;
  height: 71px;
}

.rb-foot {
  display: flex;
  flex: none;
  align-items: center;
  height: 13px;
  margin-top: 2px;
  padding-right: 6px;
  color: #3d9bcf;
  font-size: 12px;
  line-height: 13px;
}

.rb-foot span {
  flex: 1;
  text-align: center;
}

.big {
  display: flex;
  flex: none;
  flex-direction: column;
  align-items: center;
  height: 74px;
  font-size: 11px;
  white-space: nowrap;
}

.big span {
  margin-top: 4px;
  line-height: 16px;
}

.big .caret {
  margin-top: 4px;
}

.big .ic32.wide {
  width: 32px;
  height: 24px;
  margin: 6px 0 2px;
}

.w50 { width: 50px; }
.w51 { width: 51px; }
.w56 { width: 56px; }
.w60 { width: 60px; }
.w66 { width: 66px; }
.w74 { width: 74px; }
.w78 { width: 78px; }

.big.hl {
  height: 74px;
  margin: -3px 0 0 -1px;
  padding-top: 3px;
  background-color: #c7d6d4;
  border: 1px solid #a8bcb8;
}

.more {
  width: 36px;
}

.more-box {
  display: flex;
  align-items: center;
  justify-content: center;
  width: 36px;
  height: 32px;
  border: 1px solid #eee;
  border-radius: 3px;
}

.ml10 {
  margin-left: 10px;
}

.wide-more {
  width: 38px;
  margin-left: 4px;
}

.wide-more .more-box {
  width: 38px;
}

.icon-grid {
  display: grid;
  grid-auto-rows: 22px;
  margin-top: -4px;
  place-items: center;
}

.g-orient .cols3 {
  grid-template-columns: repeat(3, 25px);
  margin-left: 8px;
  height: 66px;
}

.cols2 {
  grid-template-columns: repeat(2, 25px);
  margin-left: 13px;
  height: 66px;
}

.g-orient .more {
  margin-left: 8px;
}

.g-style .cols3 {
  grid-template-columns: repeat(3, 25px);
  margin-left: 8px;
  height: 66px;
}

.row {
  display: flex;
  align-items: center;
  gap: 5px;
  height: 22px;
  font-size: 11px;
  white-space: nowrap;
}

.list-box {
  width: 115px;
  height: 65px;
  margin-left: 1px;
  padding: 0 0 0 2px;
  border: 1px solid #d8d8d8;
}

.list-box .row {
  gap: 4px;
}

.list-box .row:first-child {
  margin-top: -2px;
}

.list-arrows {
  display: flex;
  flex-direction: column;
  align-items: center;
  justify-content: space-between;
  width: 16px;
  height: 52px;
  margin: 8px 0 0 0;
}

.layer-col {
  width: 79px;
  margin-left: 12px;
}

.layer-col .row {
  gap: 4px;
}

.layer-select {
  display: flex;
  align-items: center;
  justify-content: space-between;
  width: 48px;
  height: 19px;
  margin: 1px 0 4px;
  padding: 0 6px 0 3px;
  border: 1px solid #aaa;
}

.png-icon {
  display: flex;
  flex-direction: column;
  align-items: center;
  height: 36px;
  margin-bottom: -4px;
  color: #5c4a8c;
  font-size: 14px;
  line-height: 16px;
  font-family: "Liberation Sans", sans-serif;
}

.png-icon svg {
  margin: 2px 0 0 14px;
}

.edge-col {
  width: 85px;
  margin: -3px 0 0 2px;
}

.edge-col .row {
  gap: 4px;
  height: 21px;
  padding: 0 0 2px 3px;
}

.edge-col .row.on {
  width: 60px;
  height: 22px;
  background-color: #c7d6d4;
  border: 1px solid #a8bcb8;
}

/* selection bar */
.selbar {
  display: flex;
  align-items: center;
  flex: none;
  height: 32px;
  padding-left: 10px;
  background-color: #fff;
  border-top: 1px solid #ddd;
  border-bottom: 2px solid #aaa;
}

.menu-text {
  margin: 0 3px 0 4px;
  font-size: 11px;
  white-space: nowrap;
}

.s-first {
  margin: 0 13px 0 5px;
}

.sel {
  display: flex;
  align-items: center;
  justify-content: space-between;
  height: 20px;
  padding: 0 5px 0 2px;
  border: 1px solid #999;
  font-size: 11px;
}

.w132 {
  width: 132px;
  margin-right: 9px;
}

.w140 {
  width: 140px;
}

.tools {
  display: flex;
  align-items: center;
  margin-left: 5px;
}

.tb {
  display: flex;
  align-items: center;
  justify-content: center;
  flex: none;
  width: 24px;
  height: 23px;
}

.tb.hl {
  background-color: #c7d6d4;
  border: 1px solid #b4c4c2;
}

.ml1 { margin-left: 1px; }
.ml2 { margin-left: 2px; }
.ml4 { margin-left: 4px; }
.ml5 { margin-left: 5px; }
.ml6 { margin-left: 6px; }
.ml7 { margin-left: 7px; }
.m-1 { margin-left: -1px; }
.m-2 { margin-left: -2px; }

.s-tools {
  margin: 0 8px 0 8px;
}

.s-end {
  margin-left: 9px;
}

.sel-end {
  margin: 8px 5px 0 auto;
}

/* main area */
.workspace {
  display: flex;
  flex: none;
  height: 527px;
}

.rail {
  display: flex;
  flex: none;
  flex-direction: column;
  align-items: center;
  width: 32px;
  background-color: #dcdcdc;
  border-right: 1px solid #b4b4b4;
}

.rail-gear {
  margin: 4px 0 0;
}

.ric {
  display: block;
  flex: none;
  width: 24px;
  height: 24px;
  margin-top: 17px;
}

.rail .ric:nth-of-type(2) {
  margin-top: 31px;
}

.rail-active {
  display: flex;
  align-items: center;
  justify-content: center;
  flex: none;
  width: 31px;
  height: 44px;
  margin: 8px 0 0 2px;
  background-color: #fff;
  border: 1px solid #c4c4c4;
  border-right: 0;
}

.rail-active .ric {
  margin: 0;
}

.rail-active + .ric {
  margin-top: 9px;
}

.rail .g32 { margin-top: 32px; }
.rail .g29 { margin-top: 29px; }
.rail .g19 { margin-top: 19px; }
.rail .g18 { margin-top: 18px; }

.rail-wave {
  flex: none;
  width: 30px;
  height: 8px;
  margin-top: 4px;
}

.rail .caret,
.rail .caret-more {
  margin-top: 11px;
}

.rail-wave + .caret {
  margin-top: 6px;
}

.nav {
  display: flex;
  flex: none;
  flex-direction: column;
  width: 188px;
  padding: 0 9px 0 6px;
  background-color: #fff;
  border-right: 1px solid #b4b4b4;
}

.nav-head {
  display: flex;
  align-items: center;
  justify-content: space-between;
  height: 28px;
  padding: 0 6px 0 4px;
  font-size: 12px;
}

.maxbox {
  width: 12px;
  height: 11px;
  border: 1px solid #222;
  border-top-width: 2px;
}

.tree-box {
  display: flex;
  flex-direction: column;
  width: 172px;
  height: 414px;
  border: 2px solid #e4e4e4;
}

.tree-col {
  display: flex;
  align-items: center;
  gap: 16px;
  flex: none;
  height: 21px;
  padding-left: 6px;
  font-size: 12px;
  letter-spacing: 1px;
  background-color: #f2f2f2;
  border-bottom: 1px solid #ddd;
}

.tree-main {
  display: flex;
  height: 373px;
  overflow: hidden;
}

.tree {
  position: relative;
  flex: none;
  width: 152px;
  overflow: hidden;
}

.vline {
  position: absolute;
  border-left: 1px dotted #777;
}

.v0 {
  left: 9px;
  top: 10px;
  height: 80px;
}

.v1 {
  left: 28px;
  top: 100px;
  height: 280px;
}

.node {
  position: relative;
  display: flex;
  align-items: center;
  height: 20px;
  padding-left: 19px;
  font-size: 12px;
  white-space: nowrap;
  border-bottom: 1px solid #eee;
}

.node:nth-of-type(even) {
  background-color: #fafafa;
}

.node > span {
  margin-left: 3px;
}

.node.sub > span {
  margin-left: 2px;
}

.node .tick {
  margin: 0 -1px 0 2px;
  width: 13px;
  height: 13px;
}

.sub {
  padding-left: 40px;
}

.off > span {
  color: #aaa;
}

.hdash {
  position: absolute;
  left: 10px;
  width: 8px;
  border-top: 1px dotted #777;
}

.sub .hdash {
  left: 29px;
  width: 9px;
}

.plus {
  position: absolute;
  left: 5px;
  width: 9px;
  height: 9px;
  background-color: #fff;
  border: 1px solid #bbb;
  font-style: normal;
  font-size: 10px;
  line-height: 7px;
  text-align: center;
}

.plus + svg,
.plus + .tick {
  margin-left: 0;
}

.chk {
  flex: none;
  width: 13px;
  height: 13px;
  margin-right: 2px;
}

.chk.low {
  margin-top: 6px;
}

.badge {
  position: absolute;
  left: 38px;
  top: 0;
  width: 12px;
  height: 12px;
}

.vscroll {
  display: flex;
  flex: none;
  flex-direction: column;
  align-items: center;
  width: 16px;
  background-color: #f4f4f4;
}

.vscroll .caret.up {
  margin: 7px 0;
}

.vthumb {
  display: flex;
  align-items: center;
  justify-content: center;
  flex: none;
  width: 15px;
  height: 288px;
  margin-bottom: 58px;
  background: linear-gradient(90deg, #d8d8d8, #bdbdbd);
  border: 1px solid #aaa;
  border-radius: 3px;
}

.vthumb b {
  width: 8px;
  height: 7px;
  border-top: 1px solid #555;
  border-bottom: 1px solid #555;
}

.hscroll {
  display: flex;
  align-items: center;
  height: 16px;
  background-color: #f0f0f0;
  margin-top: 1px;
}

.arrow-l, .arrow-r {
  width: 0;
  height: 0;
  border-top: 4px solid transparent;
  border-bottom: 4px solid transparent;
}

.arrow-l {
  margin-left: 7px;
  border-right: 4px solid #222;
}

.arrow-r {
  margin-left: 80px;
  border-left: 4px solid #222;
}

.hthumb {
  display: flex;
  align-items: center;
  justify-content: center;
  width: 41px;
  height: 15px;
  margin-left: 6px;
  background: linear-gradient(#e4e4e4, #c4c4c4);
  border: 1px solid #999;
  border-radius: 2px;
}

.hthumb b {
  width: 8px;
  height: 7px;
  border-left: 1px solid #555;
  border-right: 1px solid #555;
}

.panel-grip {
  width: 172px;
  height: 5px;
  margin-top: 1px;
  background-color: #d8d8d8;
  border: 1px solid #aaa;
}

.acc {
  display: flex;
  align-items: center;
  justify-content: space-between;
  width: 172px;
  height: 24px;
  padding: 0 5px 0 7px;
  color: #3d9bcf;
  font-size: 13px;
  border-bottom: 2px solid #d0d0d0;
}

.chev {
  width: 12px;
  height: 10px;
}

.viewport {
  position: relative;
  flex: 1;
  background: linear-gradient(#b9bbbd 0, #cdd0d2 170px, #dfe1e3 330px, #e6e7e9 400px, #e4e5e7 100%);
}

.model {
  position: absolute;
  left: 440px;
  top: 70px;
  width: 340px;
  height: 410px;
}

.triad {
  position: absolute;
  left: 40px;
  top: 436px;
  width: 40px;
  height: 60px;
  overflow: visible;
}

.axis {
  font-family: "Liberation Sans", sans-serif;
  font-size: 10px;
}

.axis.z { fill: #1030c0; }
.axis.y { fill: #50a050; }
.axis.x { fill: #e05050; }

.meter {
  position: absolute;
  right: 0;
  top: 365px;
  display: flex;
  flex-direction: column;
  gap: 2px;
  width: 9px;
  height: 59px;
  padding: 4px 1px 0 4px;
  background-color: #4c5259;
  border-radius: 4px 0 0 4px;
}

.meter i {
  display: block;
  height: 2px;
  background-color: #6a6f76;
}

.meter .y { background-color: #e8c030; }
.meter .g { background-color: #a8d050; }
.meter .c { background-color: #40d8a0; }

/* bottom */
.statusbar {
  flex: none;
  height: 21px;
  padding-left: 3px;
  background-color: #fff;
  border-top: 1px solid #999;
  font-size: 11px;
  line-height: 19px;
}

.status-text b {
  font-family: "Liberation Sans", sans-serif;
}

.taskbar {
  display: flex;
  flex: 1;
  align-items: flex-start;
  background-color: #1a4a5a;
  border-top: 1px solid #5a7f8c;
}

.orb {
  width: 30px;
  height: 8px;
  margin-left: 12px;
  border-radius: 15px 15px 0 0;
  background-color: #7fb0c8;
}

.task {
  width: 58px;
  height: 8px;
  margin-left: 3px;
  background-color: #a9c2cb;
  border: 1px solid #dde8ec;
  border-bottom: 0;
}

.orb + .task {
  margin-left: 18px;
}

.task-end {
  width: 13px;
  height: 8px;
  margin-left: auto;
  background-color: #6f909c;
  border: 1px solid #a8c0c8;
}

.watermark {
  position: absolute;
  left: 1065px;
  top: 634px;
  display: flex;
  gap: 8px;
}

.wm-logo {
  width: 86px;
  height: 98px;
  flex: none;
  opacity: .96;
}

.wm-text {
  color: #6fc4ee;
  text-shadow: 0 0 2px #fff, 0 0 2px #fff, 0 0 3px #fff;
}

.wm-big {
  margin-top: 5px;
  font-family: "Noto Sans CJK SC", sans-serif;
  font-size: 46px;
  font-weight: 900;
  line-height: 58px;
  white-space: nowrap;
  letter-spacing: -1px;
}

.wm-url {
  margin-top: 4px;
  font-family: "Liberation Sans", sans-serif;
  font-size: 14px;
  font-weight: bold;
  line-height: 14px;
  letter-spacing: 5px;
  white-space: nowrap;
}

.status-icons {
  position: absolute;
  left: 1275px;
  top: 710px;
  display: flex;
  gap: 5px;
}
```
